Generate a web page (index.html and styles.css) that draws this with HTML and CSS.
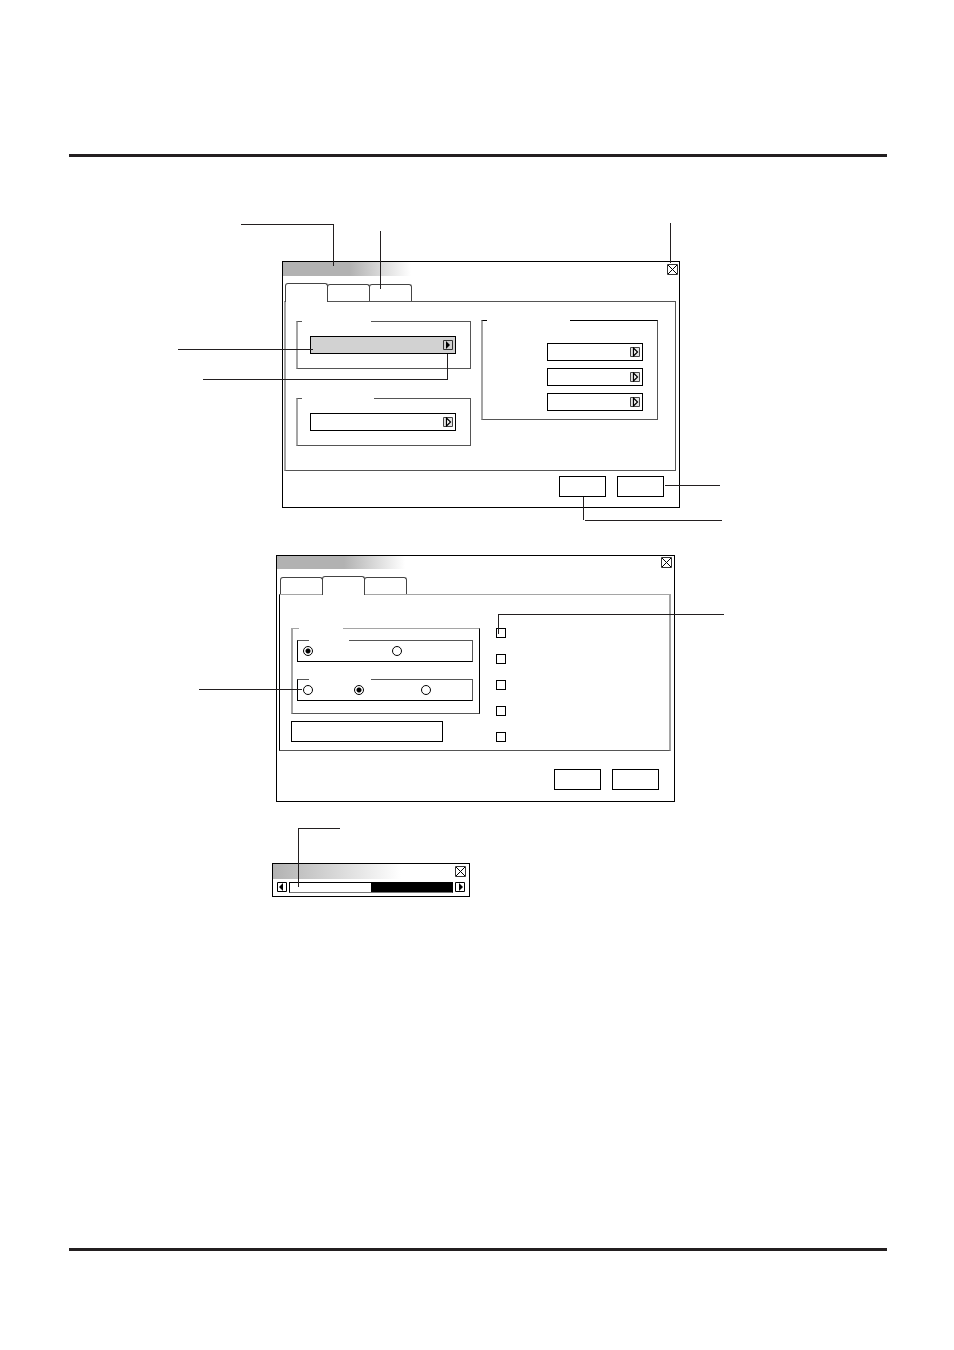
FILE: index.html
```
<!DOCTYPE html>
<html lang="en">
<head>
<meta charset="UTF-8">
<title>Control dialogs</title>
<link rel="stylesheet" href="styles.css">
</head>
<body>

<!-- shared icons -->
<svg class="sprite" aria-hidden="true">
  <symbol id="icon-close" viewBox="0 0 11 11">
    <path d="M.5 .5H10.5V10.5H.5Z" fill="#fff" stroke="#333"/>
    <path d="M1 1L10 10M10 1L1 10" fill="none" stroke="#000"/>
  </symbol>
  <symbol id="icon-open" viewBox="0 0 10 10">
    <path d="M.5 .5H9.5V9.5H.5Z" fill="#e4e4e4" stroke="#444"/>
    <path d="M3.5 1V9L7.5 5Z" fill="#fff" stroke="#000" stroke-width="1.2"/>
  </symbol>
  <symbol id="icon-open-active" viewBox="0 0 10 10">
    <path d="M.5 .5H9.5V9.5H.5Z" fill="#d2d2d2" stroke="#333"/>
    <path d="M3 1V9L7 5Z" fill="#000"/>
  </symbol>
  <symbol id="icon-left" viewBox="0 0 10 10">
    <path d="M.5 .5H9.5V9.5H.5Z" fill="#fff" stroke="#000"/>
    <path d="M6 1V9L2 5Z" fill="#000"/>
  </symbol>
  <symbol id="icon-right" viewBox="0 0 10 10">
    <path d="M.5 .5H9.5V9.5H.5Z" fill="#fff" stroke="#000"/>
    <path d="M4 1V9L8 5Z" fill="#000"/>
  </symbol>
</svg>

<header class="rule"></header>

<main class="figure">

  <!-- dialog with the drop-down lists -->
  <section class="dialog dialog-source">
    <div class="title-bar">
      <button class="icon-button close" aria-label="Close"><svg><use href="#icon-close"/></svg></button>
    </div>
    <div class="tabs">
      <button class="tab active" aria-label="Tab 1"></button>
      <button class="tab" aria-label="Tab 2"></button>
      <button class="tab" aria-label="Tab 3"></button>
    </div>
    <div class="panel">
      <div class="column">
        <fieldset class="group">
          <legend class="legend-medium"></legend>
          <div class="group-body">
            <div class="dropdown selected">
              <select aria-label="List 1"></select>
              <svg><use href="#icon-open-active"/></svg>
            </div>
          </div>
        </fieldset>
        <fieldset class="group">
          <legend class="legend-long"></legend>
          <div class="group-body">
            <div class="dropdown">
              <select aria-label="List 2"></select>
              <svg><use href="#icon-open"/></svg>
            </div>
          </div>
        </fieldset>
      </div>
      <fieldset class="group group-stack">
        <legend class="legend-wide"></legend>
        <div class="group-body">
          <div class="dropdown">
            <select aria-label="List 3"></select>
            <svg><use href="#icon-open"/></svg>
          </div>
          <div class="dropdown">
            <select aria-label="List 4"></select>
            <svg><use href="#icon-open"/></svg>
          </div>
          <div class="dropdown">
            <select aria-label="List 5"></select>
            <svg><use href="#icon-open"/></svg>
          </div>
        </div>
      </fieldset>
    </div>
    <div class="buttons">
      <button class="button" aria-label="OK"></button>
      <button class="button" aria-label="Cancel"></button>
    </div>
  </section>

  <!-- dialog with radios and tick boxes -->
  <section class="dialog dialog-options">
    <div class="title-bar">
      <button class="icon-button close" aria-label="Close"><svg><use href="#icon-close"/></svg></button>
    </div>
    <div class="tabs">
      <button class="tab" aria-label="Tab 1"></button>
      <button class="tab active" aria-label="Tab 2"></button>
      <button class="tab" aria-label="Tab 3"></button>
    </div>
    <div class="panel">
      <div class="column">
        <fieldset class="group group-outer">
          <legend class="legend-outer"></legend>
          <fieldset class="options">
            <legend class="legend-small"></legend>
            <label class="option option-long"><input type="radio" name="mode" aria-label="Mode 1" checked></label>
            <label class="option"><input type="radio" name="mode" aria-label="Mode 2"></label>
          </fieldset>
          <fieldset class="options">
            <legend class="legend-options"></legend>
            <label class="option option-short"><input type="radio" name="level" aria-label="Level 1"></label>
            <label class="option option-medium"><input type="radio" name="level" aria-label="Level 2" checked></label>
            <label class="option"><input type="radio" name="level" aria-label="Level 3"></label>
          </fieldset>
        </fieldset>
        <button class="button button-wide" aria-label="Default"></button>
      </div>
      <div class="checks">
        <input type="checkbox" aria-label="Option 1">
        <input type="checkbox" aria-label="Option 2">
        <input type="checkbox" aria-label="Option 3">
        <input type="checkbox" aria-label="Option 4">
        <input type="checkbox" aria-label="Option 5">
      </div>
    </div>
    <div class="buttons">
      <button class="button" aria-label="OK"></button>
      <button class="button" aria-label="Cancel"></button>
    </div>
  </section>

  <!-- adjustment bar -->
  <section class="dialog dialog-adjust">
    <div class="title-bar">
      <button class="icon-button close" aria-label="Close"><svg><use href="#icon-close"/></svg></button>
    </div>
    <div class="adjust">
      <button class="icon-button" aria-label="Decrease"><svg><use href="#icon-left"/></svg></button>
      <input type="range" min="0" max="100" value="50" aria-label="Adjustment">
      <button class="icon-button" aria-label="Increase"><svg><use href="#icon-right"/></svg></button>
    </div>
  </section>

  <!-- callout lines -->
  <svg class="callouts" viewBox="178 223 546 674" aria-hidden="true">
    <path d="M241 224.5H333.5V266"/>
    <path d="M380.5 231V289"/>
    <path d="M670.5 223V263"/>
    <path d="M178 349.5H313"/>
    <path d="M203 379.5H447.5V354"/>
    <path d="M665 485.5H720"/>
    <path d="M583.5 497V520M585 520.5H722"/>
    <path d="M498.5 634V614.5H724"/>
    <path d="M199 689.5H302"/>
    <path d="M298.5 887V828.5H340"/>
  </svg>
</main>

<footer class="rule"></footer>

</body>
</html>
```
FILE: styles.css
```
* {
  box-sizing: border-box;
}

body {
  display: flex;
  flex-direction: column;
  min-height: 100vh;
  margin: 0;
  padding: 154px 67px 99px 69px;
  background-color: white;
  font-family: "Liberation Sans", Arial, sans-serif;
  font-size: 10px;
}

.sprite {
  position: absolute;
  width: 0;
  height: 0;
}

.rule {
  border-top: 3px solid #231f20;
}

footer.rule {
  margin-top: auto;
}

.figure {
  position: relative;
  width: 546px;
  margin: 66px 0 0 109px;
  padding-top: 38px;
}

.callouts {
  position: absolute;
  top: 0;
  left: 0;
  width: 546px;
  height: 674px;
  fill: none;
  stroke: #231f20;
  shape-rendering: crispEdges;
  pointer-events: none;
}

/* windows */
.dialog {
  border: 1px solid black;
  background-color: white;
}

.dialog-source {
  width: 398px;
  margin-left: 104px;
}

.dialog-options {
  width: 399px;
  margin: 47px 0 0 98px;
}

.dialog-adjust {
  width: 198px;
  margin: 61px 0 0 94px;
}

.title-bar {
  display: flex;
  justify-content: flex-end;
  height: 14px;
  padding: 2px 1px 0 0;
  background: linear-gradient(to right, #b2b2b2 67px, white 128px);
}

.dialog-options .title-bar {
  height: 13px;
  padding: 1px 2px 0 0;
}

.dialog-adjust .title-bar {
  height: 15px;
  padding-right: 3px;
  background: linear-gradient(to right, #b2b2b2, white 128px);
}

.icon-button {
  width: 10px;
  height: 10px;
  padding: 0;
  border: none;
  background: none;
}

.icon-button svg {
  display: block;
  width: 100%;
  height: 100%;
}

.icon-button.close {
  width: 11px;
  height: 11px;
}

/* tabs */
.tabs {
  display: flex;
  align-items: flex-end;
  height: 18px;
  margin: 7px 0 0 3px;
}

.dialog-source .tabs {
  margin-left: 2px;
}

.tab {
  width: 43px;
  height: 17px;
  padding: 0;
  border: 1px solid #444;
  border-bottom: none;
  border-radius: 3px 3px 0 0;
  background-color: white;
}

.tab + .tab {
  margin-left: -1px;
}

.tab.active {
  position: relative;
  height: 19px;
  margin-bottom: -1px; /* covers the top line of the panel */
}

.panel {
  display: flex;
  border: 1px solid #555;
}

.dialog-source .panel {
  height: 170px;
  margin: 0 3px 0 1px;
  padding: 18px 17px 0 10px;
  border-left: 2px solid #a5a5a5;
  gap: 10px;
  align-items: flex-start;
}

.dialog-options .panel {
  height: 157px;
  margin: 0 3px 0 2px;
  padding: 33px 0 0 11px;
  border-color: #a5a5a5;
  border-right-width: 2px;
  border-left-color: black;
  border-bottom-color: #555;
  gap: 16px;
}

/* groups */
fieldset {
  min-width: 0;
  margin: 0;
  padding: 0;
}

legend {
  height: 1px;
  margin-left: 4px;
  padding: 0;
}

.legend-small {
  width: 40px;
}

.legend-outer {
  width: 44px;
}

.legend-options {
  width: 62px;
}

.legend-medium {
  width: 69px;
}

.legend-long {
  width: 72px;
}

.legend-wide {
  width: 83px;
}

.group {
  border: 1px solid #555;
  border-left: 2px solid #a5a5a5;
}

.dialog-source .column {
  display: flex;
  flex: 1;
  flex-direction: column;
  gap: 29px;
  padding-top: 1px;
}

.group-body {
  padding: 14px 14px 14px 12px;
}

.group-stack {
  flex: 1;
  border-top-color: black;
}

.group-stack .group-body {
  padding: 22px 14px 8px 64px;
}

.dropdown {
  position: relative;
}

.dropdown + .dropdown {
  margin-top: 7px;
}

.dropdown select {
  display: block;
  width: 100%;
  height: 18px;
  padding: 0 16px 0 4px;
  -webkit-appearance: none;
  appearance: none;
  border: 1px solid black;
  border-radius: 0;
  background-color: white;
}

.dropdown.selected select {
  background-color: #d2d2d2;
}

.dropdown svg {
  position: absolute;
  top: 4px;
  right: 3px;
  width: 10px;
  height: 10px;
  pointer-events: none;
}

.group-outer {
  width: 189px;
  padding: 11px 6px 12px 4px;
  border-top-color: #a5a5a5;
  border-right-color: black;
}

.group-outer > legend {
  margin-left: 2px;
}

.options {
  height: 22px;
  padding: 5px 0 0 5px;
  border: 1px solid black;
  border-top-color: #555;
  border-right-color: #555;
}

.options + .options {
  margin-top: 17px;
}

.options legend {
  margin-left: 6px;
}

.option {
  float: left;
}

.option-short {
  width: 51px;
}

.option-medium {
  width: 67px;
}

.option-long {
  width: 89px;
}

input[type="radio"] {
  display: block;
  width: 10px;
  height: 10px;
  margin: 0;
  -webkit-appearance: none;
  appearance: none;
  border: 1px solid black;
  border-radius: 50%;
}

input[type="radio"]:checked {
  background: radial-gradient(circle, black 2px, white 3px);
}

.checks {
  display: flex;
  flex-direction: column;
  gap: 16px;
}

input[type="checkbox"] {
  width: 10px;
  height: 10px;
  margin: 0;
  -webkit-appearance: none;
  appearance: none;
  border: 1px solid black;
  background-color: white;
}

/* buttons */
.button {
  width: 47px;
  height: 21px;
  padding: 0;
  border: 1px solid black;
  background-color: white;
}

.button-wide {
  display: block;
  width: 152px;
  margin-top: 7px;
}

.buttons {
  display: flex;
  justify-content: flex-end;
  gap: 11px;
  padding: 5px 15px 10px 0;
}

.dialog-options .buttons {
  padding: 18px 15px 11px 0;
}

.adjust {
  display: flex;
  gap: 2px;
  padding: 3px 4px;
}

.adjust input {
  flex: 1;
  min-width: 0;
  height: 11px;
  margin: 0;
  -webkit-appearance: none;
  appearance: none;
  border: 1px solid black;
  border-bottom-color: #777;
  background: linear-gradient(to right, white 50%, black 50%);
}

.adjust input::-webkit-slider-thumb {
  -webkit-appearance: none;
  appearance: none;
  width: 1px;
  height: 9px;
  background-color: black;
}
```
